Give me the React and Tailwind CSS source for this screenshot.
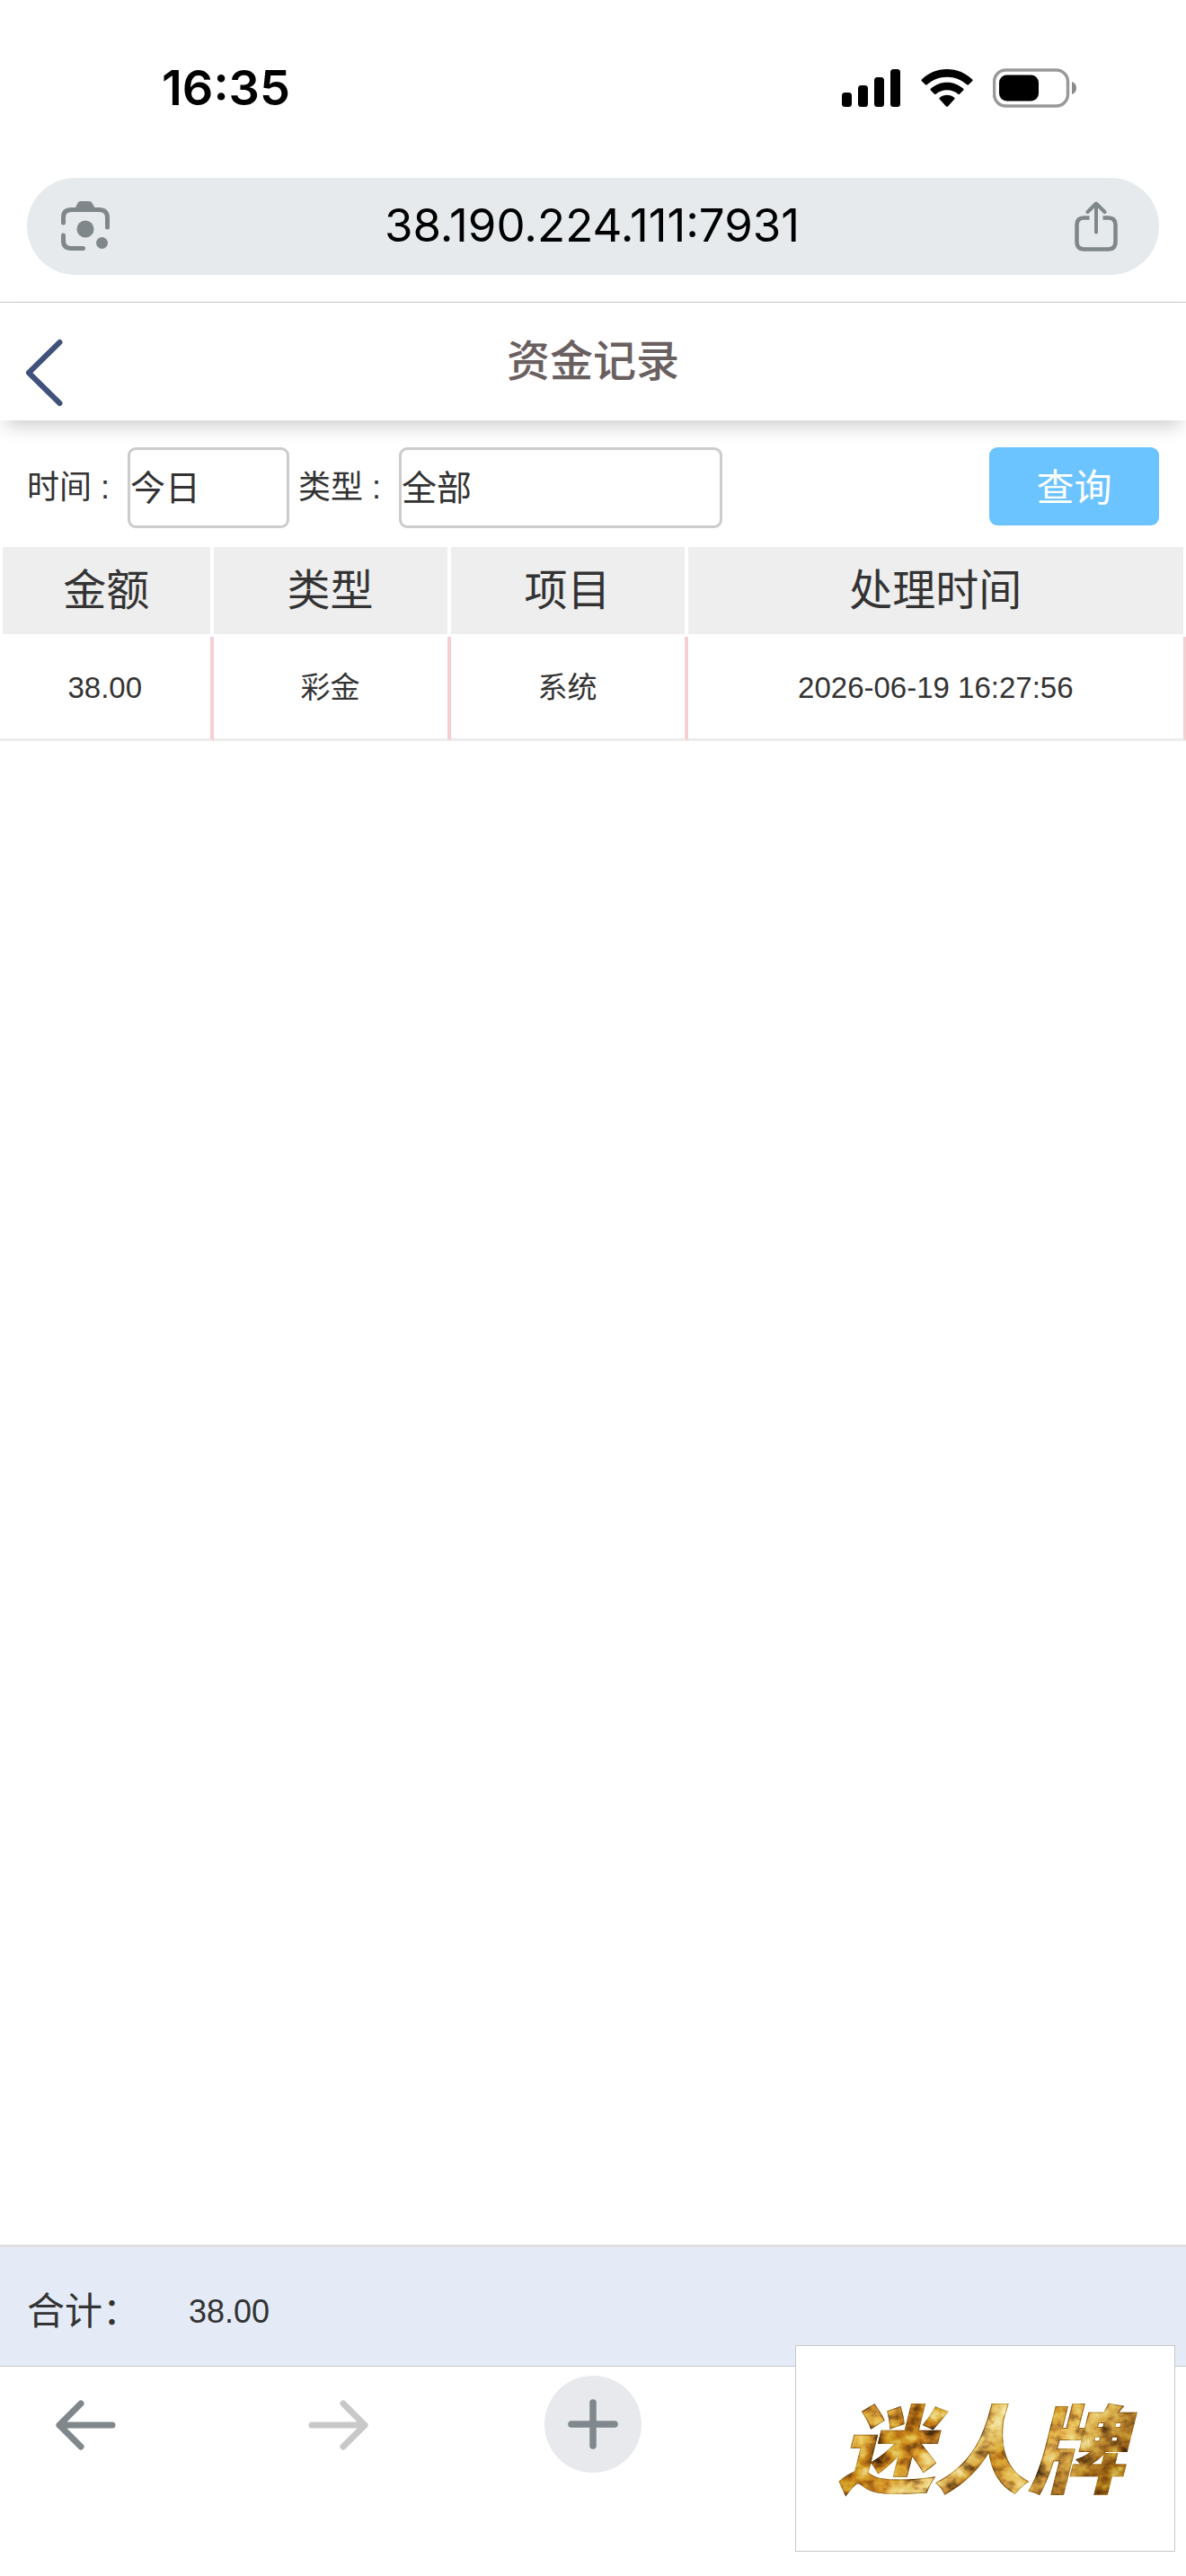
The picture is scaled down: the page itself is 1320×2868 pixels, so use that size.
import { useState } from 'react';

const registros = [
  { valor: '38.00', tipo: '彩金', item: '系统', hora: '2026-06-19 16:27:56' },
];

function StatusBar() {
  return (
    <div className="flex h-[198px] items-center justify-between pr-[121px] pb-[3px] pl-[180px] font-['Inter',sans-serif]">
      <span className="text-[54px] leading-none font-semibold text-black">16:35</span>
      <div className="flex items-center gap-[22px]">
        <svg width="66" height="42" viewBox="0 0 66 42" aria-hidden="true">
          <rect x="0" y="26" width="11" height="16" rx="3.5" />
          <rect x="18" y="18" width="11" height="24" rx="3.5" />
          <rect x="36" y="9" width="11" height="33" rx="3.5" />
          <rect x="54" y="0" width="11" height="42" rx="3.5" />
        </svg>
        <svg width="58" height="42" viewBox="0 0 58 42" aria-hidden="true">
          <path d="M29 0C40 0 50 4.400 57.200 11.500C57.700 12 57.700 12.700 57.200 13.200L53 17.300C52.500 17.800 51.800 17.800 51.300 17.300C45.300 11.800 37.600 8.700 29 8.700C20.400 8.700 12.700 11.800 6.700 17.300C6.200 17.800 5.500 17.800 5 17.300L.8 13.200C.3 12.700 .3 12 .8 11.500C8 4.400 18 0 29 0Z" />
          <path d="M29 14.700C36 14.700 42.400 17.400 47.200 21.800C47.700 22.300 47.700 23 47.200 23.500L43 27.700C42.500 28.200 41.800 28.200 41.300 27.700C38 24.900 33.800 23.300 29 23.300C24.200 23.300 20 24.900 16.700 27.700C16.200 28.200 15.500 28.200 15 27.700L10.800 23.500C10.300 23 10.300 22.300 10.800 21.800C15.600 17.400 22 14.700 29 14.700Z" />
          <path d="M29 28.800C32.100 28.800 35 29.900 37.200 31.700C37.800 32.200 37.800 32.900 37.200 33.500L29.900 41.400C29.400 41.900 28.600 41.900 28.100 41.400L20.800 33.500C20.200 32.900 20.200 32.200 20.800 31.700C23 29.900 25.900 28.800 29 28.800Z" />
        </svg>
        <svg width="94" height="44" viewBox="0 0 94 44" aria-hidden="true">
          <rect x="1.500" y="2" width="82" height="40" rx="13" fill="none" stroke="#999" strokeWidth="3.500" />
          <rect x="7" y="7.500" width="44" height="29" rx="8.500" />
          <path d="M88 15C91 16 93 18.500 93 22S91 28 88 29Z" fill="#8a8a8a" />
        </svg>
      </div>
    </div>
  );
}

function AddressBar() {
  return (
    <div className="border-b border-[#c8c8c8] px-[30px] pb-[30px]">
      <div className="flex h-[108px] items-center justify-between rounded-full bg-[#e6eaec] pr-[45px] pl-[37px]">
        <button type="button" aria-label="Lens" className="text-[#80878a]">
          <svg width="56" height="56" viewBox="0 0 56 56" fill="none" stroke="currentColor" strokeWidth="5" strokeLinecap="round">
            <path d="M3.500 24V18C3.500 12 7 9.500 12.500 9.500H43.500C49 9.500 52.500 12.500 52.500 18V29" />
            <path d="M3.500 38V44C3.500 50 7 52.500 12.500 52.500H25.500" />
            <path d="M16.500 8L19.500 2Q20.500 0 22.500 0H32.500Q34.500 0 35.500 2L39 8Z" fill="currentColor" stroke="none" />
            <circle cx="28" cy="31" r="9.500" fill="currentColor" stroke="none" />
            <circle cx="46.500" cy="46.500" r="6.500" fill="currentColor" stroke="none" />
          </svg>
        </button>
        <span className="pb-[3px] font-['Inter',sans-serif] text-[51px] leading-none text-black">38.190.224.111:7931</span>
        <button type="button" aria-label="分享" className="text-[#80878a]">
          <svg width="50" height="56" viewBox="0 0 50 56" fill="none" stroke="currentColor" strokeWidth="4.500">
            <path d="M17.500 18.500H11.500C6 18.500 3.500 21 3.500 26.500V45C3.500 50.500 6 53.500 11.500 53.500H38.500C44 53.500 46.500 50.500 46.500 45V26.500C46.500 21 44 18.500 38.500 18.500H32.500" />
            <path d="M25 34.500V3M15.500 12L25 2.500L34.500 12" strokeWidth="4" strokeLinecap="round" strokeLinejoin="round" />
          </svg>
        </button>
      </div>
    </div>
  );
}

function Brand() {
  return (
    <a href="#" aria-label="迷人牌" className="absolute right-[12px] bottom-[27px] block border border-[#c8c8c8] bg-white">
      <svg width="421" height="228" viewBox="0 0 421 228">
        <defs>
          <linearGradient id="gold" x1="0" y1="0" x2="1" y2=".5">
            <stop offset="0" stopColor="#b27a18" />
            <stop offset=".14" stopColor="#c0892a" />
            <stop offset=".24" stopColor="#e2b65a" />
            <stop offset=".32" stopColor="#b87a1c" />
            <stop offset=".44" stopColor="#cf9230" />
            <stop offset=".56" stopColor="#ecd9a0" />
            <stop offset=".66" stopColor="#c48a26" />
            <stop offset=".78" stopColor="#e6c070" />
            <stop offset="1" stopColor="#97661a" />
          </linearGradient>
          <filter id="foil" x="-5%" y="-5%" width="110%" height="110%" colorInterpolationFilters="sRGB">
            <feTurbulence type="fractalNoise" baseFrequency=".05 .06" numOctaves="4" seed="8" result="noise" />
            <feColorMatrix in="noise" type="matrix" values="1.500 0 0 0 -.2  1.500 0 0 0 -.26  1.400 0 0 0 -.36  0 0 0 0 1" result="tone" />
            <feComposite in="tone" in2="SourceGraphic" operator="in" result="cut" />
            <feBlend in="cut" in2="SourceGraphic" mode="hard-light" result="mix" />
            <feComposite in="mix" in2="SourceGraphic" operator="arithmetic" k1="0" k2=".7" k3=".3" k4="0" />
          </filter>
        </defs>
        <text
          x="206"
          y="155"
          textAnchor="middle"
          fill="url(#gold)"
          stroke="#9a6a1c"
          strokeWidth="1"
          filter="url(#foil)"
          className="font-['Noto_Sans_CJK_SC',sans-serif] text-[106px] font-black italic"
        >
          迷人牌
        </text>
      </svg>
    </a>
  );
}

export default function App() {
  const [periodo, setPeriodo] = useState('今日');
  const [tipo, setTipo] = useState('全部');

  const total = registros.reduce((soma, r) => soma + Number(r.valor), 0).toFixed(2);

  return (
    <div className="relative flex min-h-screen flex-col bg-white font-['Liberation_Sans','Noto_Sans_CJK_SC',sans-serif] text-[#333]">
      <StatusBar />
      <AddressBar />

      <header className="grid h-[131px] grid-cols-[1fr_auto_1fr] items-center px-[28px] shadow-[0_12px_20px_-6px_rgba(0,0,0,0.2)]">
        <button type="button" aria-label="返回" className="justify-self-start pt-6">
          <svg width="44" height="76" viewBox="0 0 44 76" fill="none" stroke="#40527c" strokeWidth="6" strokeLinecap="round" strokeLinejoin="round">
            <path d="M38.500 4L4 38L38.500 72" />
          </svg>
        </button>
        <h1 className="text-[48px] leading-none font-medium text-[#6a6060]">资金记录</h1>
      </header>

      <form className="flex items-center px-[30px] pt-[30px] pb-[21px]" onSubmit={(e) => e.preventDefault()}>
        <label htmlFor="periodo" className="mr-5 text-[36px] whitespace-nowrap">时间 :</label>
        <select
          id="periodo"
          value={periodo}
          onChange={(e) => setPeriodo(e.target.value)}
          className="mr-[10px] h-[90px] w-[180px] appearance-none rounded-[9px] border-3 border-[#ccc] bg-white pt-[3px] text-[39px]"
        >
          <option>今日</option>
          <option>昨日</option>
        </select>
        <label htmlFor="tipo" className="mr-5 text-[36px] whitespace-nowrap">类型 :</label>
        <select
          id="tipo"
          value={tipo}
          onChange={(e) => setTipo(e.target.value)}
          className="h-[90px] w-[360px] appearance-none rounded-[9px] border-3 border-[#ccc] bg-white pt-[3px] text-[39px]"
        >
          <option>全部</option>
          <option>彩金</option>
        </select>
        <button type="submit" className="ml-auto h-[87px] w-[189px] self-start rounded-[9px] bg-[#6bc3ff] pt-[3px] text-[42px] text-white">
          查询
        </button>
      </form>

      <table className="w-full table-fixed border-separate border-spacing-0 text-center">
        <colgroup>
          <col className="w-[18%]" />
          <col className="w-[20%]" />
          <col className="w-[20%]" />
          <col className="w-[42%]" />
        </colgroup>
        <thead>
          <tr className="h-[100px] text-[48px] leading-none">
            <th className="border-r-4 border-b-3 border-l-3 border-white bg-[#eee] p-0 font-normal">金额</th>
            <th className="border-r-4 border-b-3 border-white bg-[#eee] p-0 font-normal">类型</th>
            <th className="border-r-4 border-b-3 border-white bg-[#eee] p-0 font-normal">项目</th>
            <th className="border-r-3 border-b-3 border-white bg-[#eee] p-0 font-normal">处理时间</th>
          </tr>
        </thead>
        <tbody>
          {registros.map((r) => (
            <tr key={r.hora} className="h-[116px] text-[33px] leading-none">
              <td className="border-r-4 border-b-3 border-r-[#f5d0d2] border-b-[#ececec] p-0">{r.valor}</td>
              <td className="border-r-4 border-b-3 border-r-[#f5d0d2] border-b-[#ececec] p-0">{r.tipo}</td>
              <td className="border-r-4 border-b-3 border-r-[#f5d0d2] border-b-[#ececec] p-0">{r.item}</td>
              <td className="border-r-3 border-b-3 border-r-[#f5d0d2] border-b-[#ececec] p-0">{r.hora}</td>
            </tr>
          ))}
        </tbody>
      </table>

      <div className="mt-auto flex h-[135px] items-center border-t-3 border-[#e0e0e0] bg-[#e4ebf6] px-[30px] pt-3">
        <span className="w-[180px] text-[42px] leading-none">合计：</span>
        <span className="text-[36px] leading-none">{total}</span>
      </div>

      <nav className="grid h-[234px] grid-cols-[1fr_auto_1fr] items-start border-t border-[#c8c8c8] px-[60px] pt-[10px]">
        <div className="flex h-[108px] items-center justify-between pr-[194px]">
          <button type="button" aria-label="后退" className="text-[#80878a]">
            <svg width="70" height="70" viewBox="0 0 70 70" fill="none" stroke="currentColor" strokeWidth="7" strokeLinecap="round" strokeLinejoin="round">
              <path d="M65 36H6M30 12L6 36L30 60" />
            </svg>
          </button>
          <button type="button" aria-label="前进" className="text-[#c8c8c8]">
            <svg width="70" height="70" viewBox="0 0 70 70" fill="none" stroke="currentColor" strokeWidth="7" strokeLinecap="round" strokeLinejoin="round">
              <path d="M5 36H64M40 12L64 36L40 60" />
            </svg>
          </button>
        </div>
        <button type="button" aria-label="新标签页" className="flex size-[108px] items-center justify-center rounded-full bg-[#e7e9ec] text-[#80878d]">
          <svg width="56" height="56" viewBox="0 0 56 56" fill="none" stroke="currentColor" strokeWidth="7.500" strokeLinecap="round">
            <path d="M28 4V52M4 28H52" />
          </svg>
        </button>
      </nav>

      <Brand />
    </div>
  );
}
